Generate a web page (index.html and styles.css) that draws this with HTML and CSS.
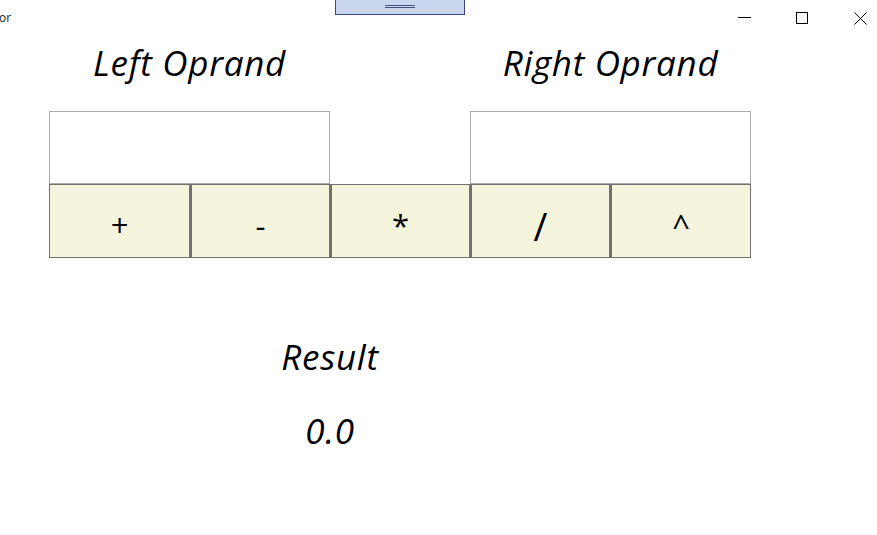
FILE: index.html
```html
<!DOCTYPE html>
<html>
<head>
<meta charset="utf-8">
<link rel="stylesheet" href="styles.css">
</head>
<body>
<header class="titlebar">
  <span class="app-title">or</span>
  <div class="drag-handle"><span class="grip"></span></div>
  <div class="controls">
    <svg class="ctl" width="13" height="13" viewBox="0 0 13 13"><path d="M0 5.5H13" stroke="#000" stroke-width="1"/></svg>
    <svg class="ctl" width="13" height="13" viewBox="0 0 13 13"><rect x="0.5" y="0.5" width="11" height="11" fill="none" stroke="#000" stroke-width="1"/></svg>
    <svg class="ctl" width="13" height="13" viewBox="0 0 13 13"><path d="M0.5 0.5L12.5 12.5M12.5 0.5L0.5 12.5" stroke="#000" stroke-width="1"/></svg>
  </div>
</header>
<main class="calc">
  <div class="label label-left">Left Oprand</div>
  <div class="label label-right">Right Oprand</div>
  <input class="operand operand-left" type="text">
  <input class="operand operand-right" type="text">
  <button class="op">+</button>
  <button class="op">-</button>
  <button class="op">*</button>
  <button class="op op-slash">/</button>
  <button class="op">^</button>
  <div class="result-label">Result</div>
  <div class="result-value">0.0</div>
</main>
</body>
</html>
```

FILE: styles.css
```css
html, body {
  margin: 0;
  padding: 0;
  background: #ffffff;
}
body {
  width: 877px;
  height: 535px;
  overflow: hidden;
  font-family: "Open Sans", "Noto Sans", sans-serif;
  color: #000;
}
.titlebar {
  position: relative;
  height: 40px;
  display: flex;
  align-items: flex-start;
  justify-content: space-between;
}
.app-title {
  font-family: "Open Sans", sans-serif;
  font-size: 12px;
  line-height: 16px;
  margin-top: 10px;
  margin-left: -1px;
  color: #1a1a1a;
}
.drag-handle {
  position: absolute;
  left: 335px;
  top: -1px;
  width: 128px;
  height: 14px;
  background: #cad5ee;
  border: 1px solid #3b4585;
  display: flex;
  justify-content: center;
  align-items: flex-start;
}
.grip {
  margin-top: 5px;
  width: 30px;
  height: 1px;
  border-top: 1px solid #4a5380;
  border-bottom: 1px solid #4a5380;
}
.controls {
  display: flex;
  gap: 45px;
  margin-top: 12px;
  padding-right: 10px;
}
.ctl {
  display: block;
  shape-rendering: crispEdges;
}
.ctl:last-child {
  shape-rendering: auto;
}
.calc {
  display: grid;
  grid-template-columns: 141px 140px 140px 140px 141px;
  margin-left: 49px;
}
.label {
  font-style: italic;
  font-size: 35px;
  line-height: 45px;
  height: 71px;
  text-align: center;
  letter-spacing: 0.7px;
}
.label-left { grid-column: 1 / 3; grid-row: 1; }
.label-right { grid-column: 4 / 6; grid-row: 1; }
.operand {
  grid-row: 2;
  height: 73px;
  box-sizing: border-box;
  border: 1px solid #ababab;
  background: #fff;
  margin: 0;
  padding: 0;
  outline: none;
}
.operand-left { grid-column: 1 / 3; }
.operand-right { grid-column: 4 / 6; }
.op {
  grid-row: 3;
  height: 74px;
  box-sizing: border-box;
  margin: 0;
  border: 1px solid #707070;
  background: #f4f4dc;
  font-family: "Open Sans", sans-serif;
  font-size: 31px;
  color: #000;
  padding: 8px 0 0 0;
}
.op + .op {
  border-left-width: 2px;
}
.op-slash {
  font-size: 38px;
  padding-top: 10px;
}
.result-label, .result-value {
  grid-column: 2 / 4;
  font-style: italic;
  font-size: 35px;
  line-height: 45px;
  text-align: center;
  letter-spacing: 0.7px;
}
.result-label { margin-top: 76px; }
.result-value { margin-top: 29px; }
```
